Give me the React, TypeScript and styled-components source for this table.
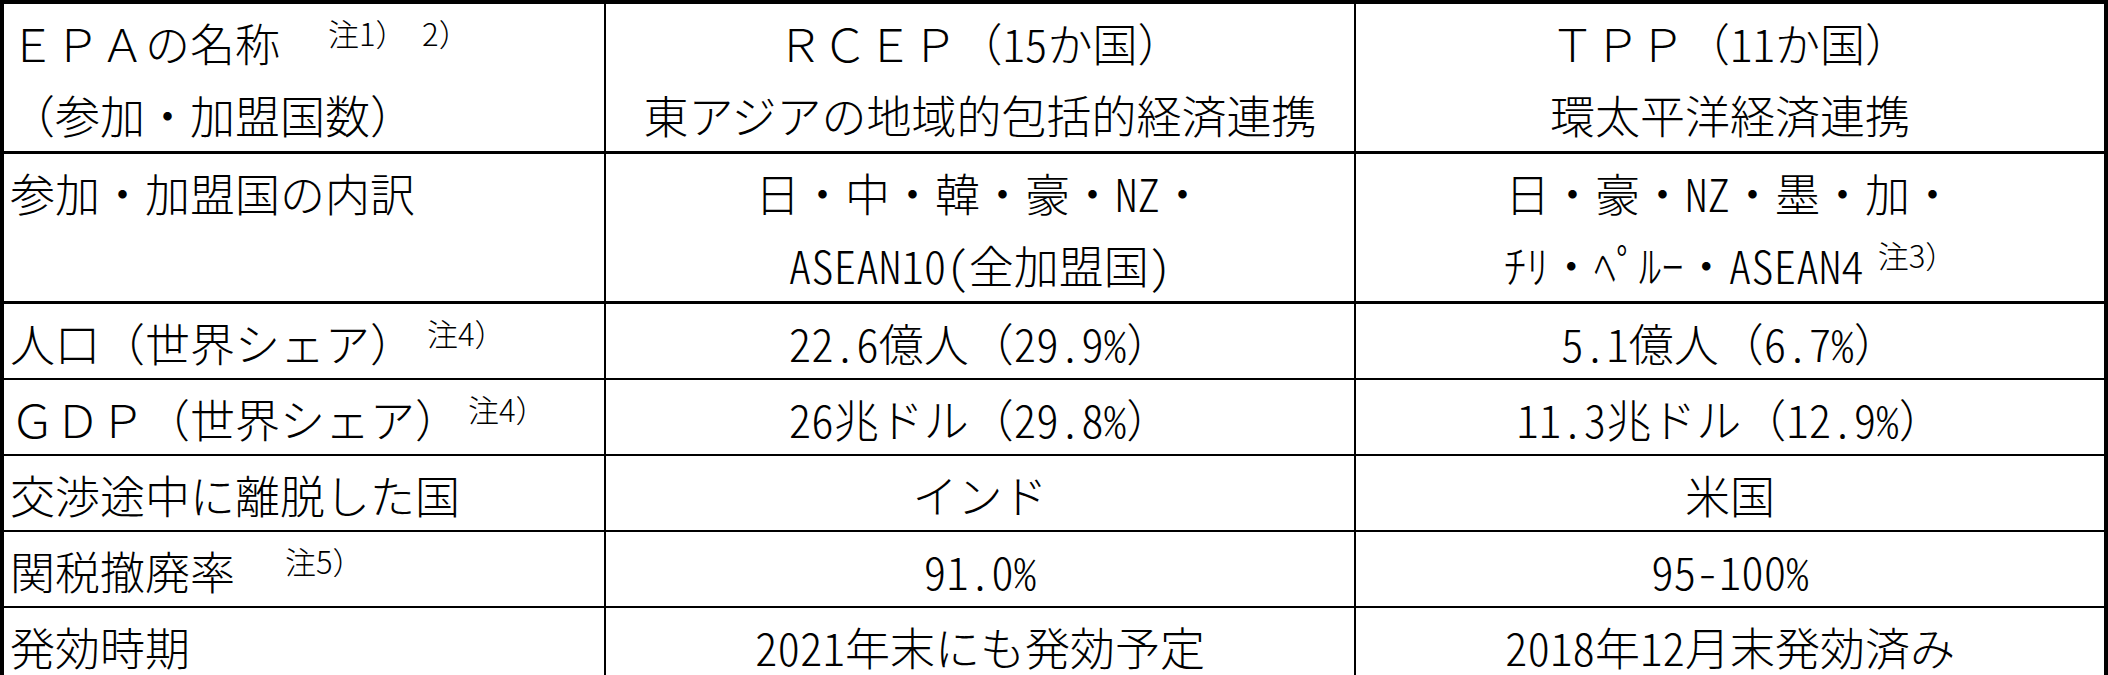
import styled, { createGlobalStyle } from "styled-components";

const GlobalStyle = createGlobalStyle`
  html, body {
    margin: 0;
    padding: 0;
    background: #fff;
  }
  body {
    font-family: "Noto Sans CJK JP", "Noto Sans", sans-serif;
    color: #000;
  }
`;

const Table = styled.table`
  width: 2108px;
  height: 675px;
  border-collapse: collapse;
  table-layout: fixed;
  border: 4px solid #000;
  font-size: 45px;
  font-weight: 300;
`;

const Row = styled.tr<{ $h: number; $thick?: boolean }>`
  height: ${(p) => p.$h}px;
  border-bottom: ${(p) => (p.$thick ? 3 : 2)}px solid #000;
`;

const Cell = styled.td<{ $center?: boolean }>`
  border-left: 2px solid #000;
  padding: 3px 6px 0;
  text-align: ${(p) => (p.$center ? "center" : "left")};
  vertical-align: middle;
  line-height: 71px;
  white-space: nowrap;
`;

const Line = styled.div`
  line-height: 72px;
`;

// half-width digits and letters, narrow like a Japanese gothic
const N = styled.span`
  font-feature-settings: "hwid" 1;
`;

const Sup = styled.span<{ $gap?: number }>`
  font-size: 31px;
  line-height: 1;
  vertical-align: 16px;
  margin-left: ${(p) => p.$gap ?? 0}px;
`;

function App() {
  return (
    <>
      <GlobalStyle />
      <Table>
        <colgroup>
          <col style={{ width: 603 }} />
          <col style={{ width: 750 }} />
          <col />
        </colgroup>
        <tbody>
          <Row $h={150} $thick>
            <Cell>
              <Line>
                ＥＰＡの名称<Sup $gap={48}>注1）　2）</Sup>
              </Line>
              <Line>（参加・加盟国数）</Line>
            </Cell>
            <Cell $center>
              <Line>
                ＲＣＥＰ（<N>15</N>か国）
              </Line>
              <Line>東アジアの地域的包括的経済連携</Line>
            </Cell>
            <Cell $center>
              <Line>
                ＴＰＰ（<N>11</N>か国）
              </Line>
              <Line>環太平洋経済連携</Line>
            </Cell>
          </Row>
          <Row $h={150} $thick>
            <Cell>
              <Line>参加・加盟国の内訳</Line>
              <Line>&nbsp;</Line>
            </Cell>
            <Cell $center>
              <Line>
                日・中・韓・豪・<N>NZ</N>・
              </Line>
              <Line>
                <N>ASEAN10(</N>全加盟国<N>)</N>
              </Line>
            </Cell>
            <Cell $center>
              <Line>
                日・豪・<N>NZ</N>・墨・加・
              </Line>
              <Line>
                ﾁﾘ・ﾍﾟﾙｰ・<N>ASEAN4</N>
                <Sup $gap={14}>注3）</Sup>
              </Line>
            </Cell>
          </Row>
          <Row $h={74}>
            <Cell>
              人口（世界シェア）<Sup $gap={12}>注4）</Sup>
            </Cell>
            <Cell $center>
              <N>22.6</N>億人（<N>29.9%</N>）
            </Cell>
            <Cell $center>
              <N>5.1</N>億人（<N>6.7%</N>）
            </Cell>
          </Row>
          <Row $h={74}>
            <Cell>
              ＧＤＰ（世界シェア）<Sup $gap={8}>注4）</Sup>
            </Cell>
            <Cell $center>
              <N>26</N>兆ドル（<N>29.8%</N>）
            </Cell>
            <Cell $center>
              <N>11.3</N>兆ドル（<N>12.9%</N>）
            </Cell>
          </Row>
          <Row $h={74}>
            <Cell>交渉途中に離脱した国</Cell>
            <Cell $center>インド</Cell>
            <Cell $center>米国</Cell>
          </Row>
          <Row $h={74}>
            <Cell>
              関税撤廃率<Sup $gap={50}>注5）</Sup>
            </Cell>
            <Cell $center>
              <N>91.0%</N>
            </Cell>
            <Cell $center>
              <N>95-100%</N>
            </Cell>
          </Row>
          <Row $h={74}>
            <Cell>発効時期</Cell>
            <Cell $center>
              <N>2021</N>年末にも発効予定
            </Cell>
            <Cell $center>
              <N>2018</N>年<N>12</N>月末発効済み
            </Cell>
          </Row>
        </tbody>
      </Table>
    </>
  );
}

export default App;
